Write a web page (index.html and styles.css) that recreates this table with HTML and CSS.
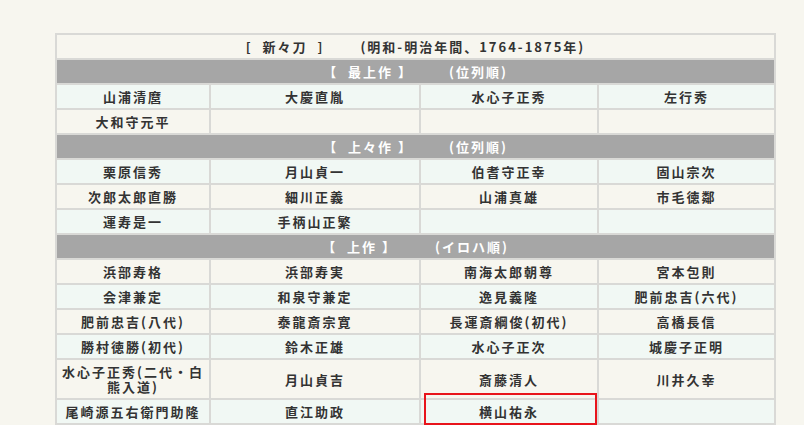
FILE: index.html
```html
<!DOCTYPE html>
<html lang="ja">
<head>
<meta charset="utf-8">
<title>新々刀</title>
<link rel="stylesheet" href="styles.css">
</head>
<body>
<div class="page">
  <table class="swords">
    <colgroup>
      <col class="c1"><col class="c2"><col class="c3"><col class="c4">
    </colgroup>
    <tbody>
      <tr class="title"><td colspan="4">[&nbsp; 新々刀 &nbsp;]<span class="note">(明和-明治年間、1764-1875年)</span></td></tr>
      <tr class="rank"><td colspan="4">【&nbsp; 最上作 】<span class="order">(位列順)</span></td></tr>
      <tr class="mint"><td>山浦清麿</td><td>大慶直胤</td><td>水心子正秀</td><td>左行秀</td></tr>
      <tr class="beige"><td>大和守元平</td><td></td><td></td><td></td></tr>
      <tr class="rank"><td colspan="4">【&nbsp; 上々作 】<span class="order">(位列順)</span></td></tr>
      <tr class="mint"><td>栗原信秀</td><td>月山貞一</td><td>伯耆守正幸</td><td>固山宗次</td></tr>
      <tr class="beige"><td>次郎太郎直勝</td><td>細川正義</td><td>山浦真雄</td><td>市毛徳鄰</td></tr>
      <tr class="mint"><td>運寿是一</td><td>手柄山正繁</td><td></td><td></td></tr>
      <tr class="rank"><td colspan="4">【&nbsp; 上作 】<span class="order order-iroha">(イロハ順)</span></td></tr>
      <tr class="beige"><td>浜部寿格</td><td>浜部寿実</td><td>南海太郎朝尊</td><td>宮本包則</td></tr>
      <tr class="mint"><td>会津兼定</td><td>和泉守兼定</td><td>逸見義隆</td><td>肥前忠吉(六代)</td></tr>
      <tr class="beige"><td>肥前忠吉(八代)</td><td>泰龍斎宗寛</td><td>長運斎綱俊(初代)</td><td>高橋長信</td></tr>
      <tr class="mint"><td>勝村徳勝(初代)</td><td>鈴木正雄</td><td>水心子正次</td><td>城慶子正明</td></tr>
      <tr class="beige"><td>水心子正秀(二代・白熊入道)</td><td>月山貞吉</td><td>斎藤清人</td><td>川井久幸</td></tr>
      <tr class="mint"><td>尾崎源五右衛門助隆</td><td>直江助政</td><td>横山祐永</td><td></td></tr>
    </tbody>
  </table>
  <div class="mark"></div>
</div>
</body>
</html>
```
FILE: styles.css
```css
html, body {
  margin: 0;
  padding: 0;
  background: #f7f6ef;
}
.page {
  position: relative;
  padding: 33px 0 0 55px;
}
.swords {
  border-collapse: separate;
  border-spacing: 0;
  border: 1px solid #d9d9d6;
  table-layout: fixed;
  width: 721px;
  font-family: "Noto Sans CJK JP", "Noto Sans", sans-serif;
  font-size: 13px;
  font-weight: bold;
  letter-spacing: 2px;
  color: #333;
}
.c1 { width: 154px; }
.c2 { width: 210px; }
.c3 { width: 178px; }
.c4 { width: 177px; }
.swords td {
  border: 1px solid #d9d9d6;
  padding: 4px 2px;
  line-height: 15px;
  text-align: center;
  height: 15px;
}
.title td {
  background: #f7f6ef;
}
.note { margin-left: 36px; }
.rank td {
  background: #a6a6a6;
  color: #fff;
}
.order { margin-left: 36px; }
.order-iroha { margin-left: 38px; }
.mint td { background: #f1f8f4; }
.beige td { background: #f7f6ef; }
.mark {
  position: absolute;
  left: 424px;
  top: 393px;
  width: 169px;
  height: 28px;
  border: 2px solid #e8141b;
}
```
